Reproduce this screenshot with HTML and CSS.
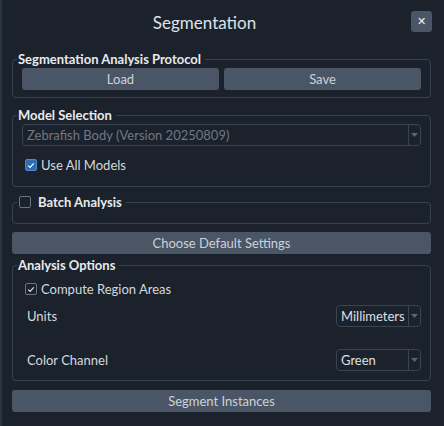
FILE: index.html
```html
<!DOCTYPE html>
<html lang="en">
<head>
    <meta charset="UTF-8">
    <title>Segmentation</title>
    <link rel="stylesheet" href="styles.css">
</head>
<body>
<div class="window">
    <div class="header">
        <h1>Segmentation</h1>
        <button class="close-btn">&#x2715;</button>
    </div>

    <fieldset class="group group-protocol">
        <legend>Segmentation Analysis Protocol</legend>
        <div class="btn-row">
            <button class="btn">Load</button>
            <button class="btn">Save</button>
        </div>
    </fieldset>

    <fieldset class="group group-model">
        <legend>Model Selection</legend>
        <div class="combo combo-wide disabled">
            <span class="combo-text">Zebrafish Body (Version 20250809)</span>
            <span class="combo-arrow"><svg width="7" height="4" viewBox="0 0 7 4"><path d="M0 0h7L3.5 4z" fill="#5b6572"/></svg></span>
        </div>
        <label class="check-row">
            <span class="check checked-blue">
                <svg width="11" height="11" viewBox="0 0 11 11"><path d="M2.5 5.6l2 2 4-4.4" fill="none" stroke="#fff" stroke-width="1.4"/></svg>
            </span>
            Use All Models
        </label>
    </fieldset>

    <fieldset class="group group-batch">
        <legend><span class="check"></span>Batch Analysis</legend>
    </fieldset>

    <button class="btn btn-full btn-defaults">Choose Default Settings</button>

    <fieldset class="group group-options">
        <legend>Analysis Options</legend>
        <label class="check-row">
            <span class="check">
                <svg width="11" height="11" viewBox="0 0 11 11"><path d="M2.5 5.6l2 2 4-4.4" fill="none" stroke="#e6e8eb" stroke-width="1.3"/></svg>
            </span>
            Compute Region Areas
        </label>
        <div class="option-row row-units">
            <span>Units</span>
            <div class="combo combo-small">
                <span class="combo-text">Millimeters</span>
                <span class="combo-arrow"><svg width="7" height="4" viewBox="0 0 7 4"><path d="M0 0h7L3.5 4z" fill="#5b6572"/></svg></span>
            </div>
        </div>
        <div class="option-row row-channel">
            <span>Color Channel</span>
            <div class="combo combo-small">
                <span class="combo-text">Green</span>
                <span class="combo-arrow"><svg width="7" height="4" viewBox="0 0 7 4"><path d="M0 0h7L3.5 4z" fill="#5b6572"/></svg></span>
            </div>
        </div>
    </fieldset>

    <button class="btn btn-full btn-segment">Segment Instances</button>
</div>
</body>
</html>
```

FILE: styles.css
```css
body {
    margin: 0;
    background-color: #1b222c;
    font-family: Lato, "Open Sans", sans-serif;
    color: #d5d9de;
}

.window {
    height: 426px;
    box-sizing: border-box;
    border-left: 2px solid #2b3440;
    padding: 0 13px 0 10px;
    display: flex;
    flex-direction: column;
}

.header {
    position: relative;
    height: 44px;
    display: flex;
    align-items: center;
    justify-content: center;
    margin-bottom: 8px;
}

h1 {
    margin: 0;
    font-size: 17px;
    font-weight: normal;
    color: #dfe2e6;
    padding-right: 34px;
}

.close-btn {
    position: absolute;
    right: -1px;
    top: 11px;
    width: 21px;
    height: 21px;
    border: none;
    border-radius: 3px;
    background-color: #4a5566;
    color: #f0f2f4;
    font-size: 11px;
    font-weight: bold;
    padding: 0;
    font-family: "DejaVu Sans", sans-serif;
}

.group {
    margin: 0;
    border: 1px solid #384250;
    border-radius: 4px;
    padding: 2px 9px 0 9px;
    min-width: 0;
}

legend {
    font-size: 13px;
    font-weight: bold;
    line-height: 14px;
    color: #e8eaed;
    padding: 0 4px 0 1px;
    margin-left: -5px;
    display: flex;
    align-items: center;
}

.btn {
    border: none;
    border-radius: 3px;
    background-color: #4a5566;
    color: #cdd2d8;
    font-family: Lato, "Open Sans", sans-serif;
    font-size: 13px;
    height: 22px;
    padding: 0;
}

.btn-row {
    display: flex;
    gap: 5px;
    padding-bottom: 7px;
}

.btn-row .btn {
    flex: 1;
}

.btn-full {
    width: 100%;
}

.group-model {
    margin-top: 10px;
    padding-bottom: 13px;
}

.combo {
    display: flex;
    align-items: center;
    box-sizing: border-box;
    height: 22px;
    border: 1px solid #3a4452;
    border-radius: 4px;
    font-size: 13px;
}

.combo-text {
    flex: 1;
    padding-left: 4px;
    white-space: nowrap;
    overflow: hidden;
}

.combo-arrow {
    width: 11px;
    height: 100%;
    border-left: 1px solid #3a4452;
    display: flex;
    align-items: center;
    justify-content: center;
}

.combo.disabled {
    color: #6f7886;
}

.combo-small {
    width: 85px;
    color: #dde0e4;
}

.check-row {
    display: flex;
    align-items: center;
    gap: 4px;
    font-size: 13px;
    color: #d5d9de;
    margin-left: 3px;
}

.group-model .check-row {
    margin-top: 11px;
}

.check {
    box-sizing: border-box;
    width: 12px;
    height: 12px;
    border: 1px solid #6a7482;
    border-radius: 2px;
    display: flex;
    align-items: center;
    justify-content: center;
}

.check svg {
    display: block;
}

.check.checked-blue {
    background-color: #2f6db0;
    border-color: #4b8ad0;
}

legend .check {
    margin-right: 7px;
    margin-left: 1px;
}

.group-batch {
    margin-top: 8px;
    padding-bottom: 12px;
}

.btn-defaults {
    margin-top: 8px;
}

.group-options {
    margin-top: 4px;
    padding-top: 9px;
    padding-bottom: 9px;
}

.option-row {
    display: flex;
    align-items: center;
    justify-content: space-between;
    font-size: 13px;
    color: #d5d9de;
    padding-left: 5px;
}

.row-units {
    margin-top: 8px;
}

.row-channel {
    margin-top: 22px;
}

.btn-segment {
    margin-top: 9px;
}
```
